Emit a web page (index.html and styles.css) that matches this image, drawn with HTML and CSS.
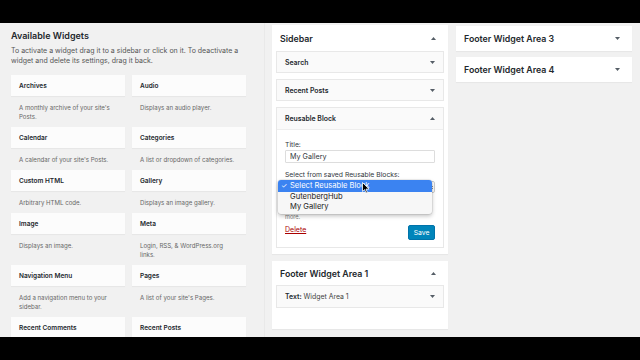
FILE: index.html
```html
<!DOCTYPE html>
<html lang="en">

<head>
  <meta charset="UTF-8">
  <title>Widgets</title>
  <link rel="stylesheet" href="styles.css">
</head>

<body>

  <div class="frame">
    <div class="admin">

      <!-- Available widgets -->
      <div class="available">
        <h2 class="available-title">Available Widgets</h2>
        <p class="available-desc">To activate a widget drag it to a sidebar or click on it. To deactivate a widget and delete its settings, drag it back.</p>

        <div class="widget-list">
          <div class="widget-item">
            <div class="widget-box">Archives</div>
            <p class="widget-desc">A monthly archive of your site's Posts.</p>
          </div>
          <div class="widget-item">
            <div class="widget-box">Audio</div>
            <p class="widget-desc">Displays an audio player.</p>
          </div>
          <div class="widget-item">
            <div class="widget-box">Calendar</div>
            <p class="widget-desc">A calendar of your site's Posts.</p>
          </div>
          <div class="widget-item">
            <div class="widget-box">Categories</div>
            <p class="widget-desc">A list or dropdown of categories.</p>
          </div>
          <div class="widget-item">
            <div class="widget-box">Custom HTML</div>
            <p class="widget-desc">Arbitrary HTML code.</p>
          </div>
          <div class="widget-item">
            <div class="widget-box">Gallery</div>
            <p class="widget-desc">Displays an image gallery.</p>
          </div>
          <div class="widget-item">
            <div class="widget-box">Image</div>
            <p class="widget-desc">Displays an image.</p>
          </div>
          <div class="widget-item">
            <div class="widget-box">Meta</div>
            <p class="widget-desc">Login, RSS, &amp; WordPress.org links.</p>
          </div>
          <div class="widget-item">
            <div class="widget-box">Navigation Menu</div>
            <p class="widget-desc">Add a navigation menu to your sidebar.</p>
          </div>
          <div class="widget-item">
            <div class="widget-box">Pages</div>
            <p class="widget-desc">A list of your site's Pages.</p>
          </div>
          <div class="widget-item">
            <div class="widget-box widget-box-cut">Recent Comments</div>
          </div>
          <div class="widget-item">
            <div class="widget-box widget-box-cut">Recent Posts</div>
          </div>
        </div>
      </div>

      <!-- Sidebars, middle column -->
      <div class="area-col area-col-mid">
        <div class="area">
          <div class="area-head">
            <h3>Sidebar</h3>
            <svg class="arrow" width="5" height="3" viewBox="0 0 5 3"><path d="M0 3 L2.5 0 L5 3 Z" /></svg>
          </div>
          <div class="area-widgets">
            <div class="sb-widget">
              <div class="sb-head">
                <span>Search</span>
                <svg class="arrow" width="5" height="3" viewBox="0 0 5 3"><path d="M0 0 L5 0 L2.5 3 Z" /></svg>
              </div>
            </div>
            <div class="sb-widget">
              <div class="sb-head">
                <span>Recent Posts</span>
                <svg class="arrow" width="5" height="3" viewBox="0 0 5 3"><path d="M0 0 L5 0 L2.5 3 Z" /></svg>
              </div>
            </div>
            <div class="sb-widget">
              <div class="sb-head sb-head-tall">
                <span>Reusable Block</span>
                <svg class="arrow" width="5" height="3" viewBox="0 0 5 3"><path d="M0 3 L2.5 0 L5 3 Z" /></svg>
              </div>
              <div class="sb-body">
                <label class="field-label" for="blockTitle">Title:</label>
                <input class="field-input" id="blockTitle" type="text" value="My Gallery">

                <label class="field-label field-label-gap">Select from saved Reusable Blocks:</label>
                <div class="select-wrap">
                  <div class="select-closed">
                    <svg class="select-arrows" width="4" height="7" viewBox="0 0 4 7"><path d="M0.5 2.6 L2 1 L3.5 2.6 M0.5 4.4 L2 6 L3.5 4.4" fill="none" stroke="#222" stroke-width="0.9" /></svg>
                  </div>
                  <ul class="select-menu">
                    <li class="select-option is-active"><span class="check">✓</span>Select Reusable Block</li>
                    <li class="select-option">GutenbergHub</li>
                    <li class="select-option">My Gallery</li>
                  </ul>
                  <svg class="cursor" width="8" height="12" viewBox="0 0 8 12"><path d="M0.5 0.5 L0.5 9.5 L2.6 7.6 L4 11 L5.4 10.4 L4 7.1 L7 7.1 Z" fill="#000" stroke="#fff" stroke-width="0.8" /></svg>
                </div>

                <p class="help">more.</p>

                <div class="sb-actions">
                  <a class="delete" href="#">Delete</a>
                  <button class="save">Save</button>
                </div>
              </div>
            </div>
          </div>
        </div>

        <div class="area area-footer1">
          <div class="area-head area-head-short">
            <h3>Footer Widget Area 1</h3>
            <svg class="arrow" width="5" height="3" viewBox="0 0 5 3"><path d="M0 3 L2.5 0 L5 3 Z" /></svg>
          </div>
          <div class="area-widgets area-widgets-drop">
            <div class="sb-widget">
              <div class="sb-head sb-head-tall">
                <span>Text:<span class="in-title"> Widget Area 1</span></span>
                <svg class="arrow" width="5" height="3" viewBox="0 0 5 3"><path d="M0 0 L5 0 L2.5 3 Z" /></svg>
              </div>
            </div>
          </div>
        </div>
      </div>

      <!-- Sidebars, right column -->
      <div class="area-col area-col-right">
        <div class="area area-closed">
          <div class="area-head">
            <h3>Footer Widget Area 3</h3>
            <svg class="arrow" width="5" height="3" viewBox="0 0 5 3"><path d="M0 0 L5 0 L2.5 3 Z" /></svg>
          </div>
        </div>
        <div class="area area-closed">
          <div class="area-head">
            <h3>Footer Widget Area 4</h3>
            <svg class="arrow" width="5" height="3" viewBox="0 0 5 3"><path d="M0 0 L5 0 L2.5 3 Z" /></svg>
          </div>
        </div>
      </div>

    </div>
  </div>

</body>

</html>
```

FILE: styles.css
```css
* {
  box-sizing: border-box;
}

body {
  margin: 0;
  background-color: #000;
  font-family: Inter, "Noto Sans", "Liberation Sans", sans-serif;
  color: #23282d;
}

.frame {
  width: 640px;
  height: 360px;
  padding: 23px 0;
  overflow: hidden;
}

.admin {
  height: 314px;
  background-color: #f1f1f1;
  display: flex;
  align-items: flex-start;
  overflow: hidden;
}

/* Available widgets */

.available {
  width: 265px;
  flex: none;
  padding: 6px 19px 0 11px;
  border-right: 1px solid #e9e9e9;
  height: 100%;
}

.available-title {
  margin: 0;
  font-size: 9px;
  line-height: 14px;
  font-weight: 600;
}

.available-desc {
  margin: 3px 0 0;
  font-size: 7px;
  line-height: 10px;
  color: #555;
}

.widget-list {
  margin-top: 9px;
  display: grid;
  grid-template-columns: 114px 114px;
  column-gap: 7px;
}

.widget-box {
  height: 21px;
  line-height: 22px;
  padding: 0 8px;
  background-color: #fcfcfc;
  box-shadow: 0 1px 1px rgba(0, 0, 0, 0.04);
  font-size: 6.5px;
  font-weight: 600;
}

.widget-box-cut {
  height: 24px;
}

.widget-desc {
  margin: 0;
  padding: 7px 8px 6px;
  font-size: 6.1px;
  line-height: 9px;
  color: #666;
}

/* Widget areas */

.area-col {
  width: 176px;
  flex: none;
  display: flex;
  flex-direction: column;
}

.area-col-mid {
  margin-left: 7px;
  margin-top: 2px;
  gap: 7px;
}

.area-col-right {
  margin-left: 8px;
  margin-top: 3px;
  gap: 6px;
}

.area {
  background-color: #fff;
  box-shadow: 0 1px 1px rgba(0, 0, 0, 0.04);
}

.area-head {
  height: 26px;
  padding: 0 12px 0 8px;
  display: flex;
  align-items: center;
  justify-content: space-between;
}

.area-closed .area-head {
  height: 25px;
}

.area-head-short {
  height: 24px;
}

.area-head h3 {
  margin: 0;
  font-size: 8.8px;
  font-weight: 600;
}

.arrow {
  fill: #555d66;
  display: block;
}

.area-widgets {
  padding: 0 4px 6px;
  display: flex;
  flex-direction: column;
  gap: 6px;
}

.area-widgets-drop {
  padding-bottom: 21px;
}

.sb-widget {
  background-color: #fafafa;
  border: 1px solid #e8e8e8;
}

.sb-head {
  height: 20px;
  padding: 0 8px;
  display: flex;
  align-items: center;
  justify-content: space-between;
  font-size: 6.9px;
  font-weight: 600;
}

.sb-head-tall {
  height: 21px;
}

.in-title {
  font-weight: 400;
  color: #444;
}

.sb-body {
  background-color: #fff;
  padding: 10px 8px 7px;
  border-top: 1px solid #eee;
}

.field-label {
  display: block;
  font-size: 6.8px;
  line-height: 10px;
  color: #32373c;
}

.field-label-gap {
  margin-top: 7px;
}

.field-input {
  display: block;
  width: 100%;
  height: 13px;
  margin: 0;
  padding: 0 4px;
  border: 1px solid #ddd;
  border-radius: 1px;
  font-family: inherit;
  font-size: 7.2px;
  color: #32373c;
  background-color: #fff;
}

.select-wrap {
  position: relative;
  margin-top: 1px;
}

.select-closed {
  height: 12px;
  border: 1px solid #ccc;
  border-radius: 2px;
  background-color: #fff;
  display: flex;
  align-items: center;
  justify-content: flex-end;
  padding-right: 1px;
}

.select-arrows {
  display: block;
}

.select-menu {
  position: absolute;
  left: -7px;
  top: -1px;
  width: 154px;
  margin: 0;
  padding: 0 0 2px;
  list-style: none;
  background-color: #f7f7f7;
  border-radius: 3px;
  box-shadow: 0 2px 4px rgba(0, 0, 0, 0.25), 0 0 0 0.5px rgba(0, 0, 0, 0.12);
  font-size: 7.6px;
  color: #222;
}

.select-option {
  height: 10px;
  line-height: 10px;
  padding-left: 12px;
}

.select-option.is-active {
  position: relative;
  height: 12px;
  line-height: 12px;
  background-color: #3b83f1;
  color: #fff;
  border-radius: 3px 3px 0 0;
}

.check {
  position: absolute;
  left: 3px;
  font-size: 7px;
}

.cursor {
  position: absolute;
  left: 77px;
  top: 1px;
}

.help {
  margin: 20px 0 0;
  font-size: 5.6px;
  line-height: 8px;
  color: #777;
}

.sb-actions {
  margin-top: 4px;
  display: flex;
  justify-content: space-between;
  align-items: flex-start;
}

.delete {
  margin-top: 1px;
  font-size: 7px;
  line-height: 8px;
  color: #a00;
  text-decoration: underline;
}

.save {
  width: 27px;
  height: 15px;
  padding: 0;
  font-family: inherit;
  font-size: 6.8px;
  color: #fff;
  background-color: #0085ba;
  border: 1px solid #0073aa;
  border-radius: 2px;
}
```
